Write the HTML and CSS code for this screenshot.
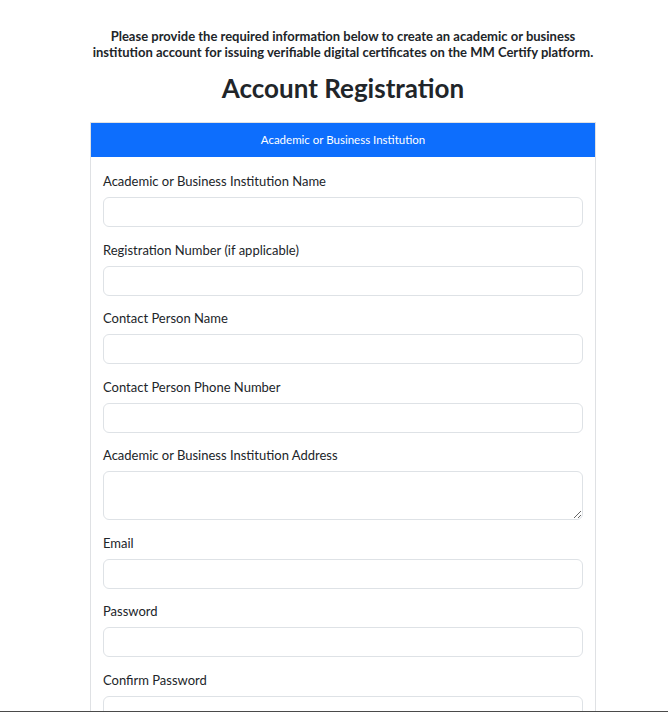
FILE: index.html
```html
<!DOCTYPE html>
<html lang="en">
<head>
<meta charset="utf-8">
<title>Account Registration</title>
<link rel="stylesheet" href="styles.css">
</head>
<body>
<main class="page">
  <p class="intro">Please provide the required information below to create an academic or business<br>institution account for issuing verifiable digital certificates on the MM Certify platform.</p>
  <h2 class="title">Account Registration</h2>
  <section class="card">
    <div class="card-header">Academic or Business Institution</div>
    <form class="card-body">
      <div class="field">
        <label class="label" for="name">Academic or Business Institution Name</label>
        <input class="control" id="name" type="text">
      </div>
      <div class="field">
        <label class="label" for="reg">Registration Number (if applicable)</label>
        <input class="control" id="reg" type="text">
      </div>
      <div class="field">
        <label class="label" for="contact">Contact Person Name</label>
        <input class="control" id="contact" type="text">
      </div>
      <div class="field">
        <label class="label" for="phone">Contact Person Phone Number</label>
        <input class="control" id="phone" type="text">
      </div>
      <div class="field">
        <label class="label" for="addr">Academic or Business Institution Address</label>
        <textarea class="control area" id="addr"></textarea>
      </div>
      <div class="field">
        <label class="label" for="email">Email</label>
        <input class="control" id="email" type="email">
      </div>
      <div class="field">
        <label class="label" for="pw">Password</label>
        <input class="control" id="pw" type="password">
      </div>
      <div class="field">
        <label class="label" for="pw2">Confirm Password</label>
        <input class="control" id="pw2" type="password">
      </div>
    </form>
  </section>
</main>
<div class="bottom-edge"></div>
</body>
</html>
```
FILE: styles.css
```css
* { box-sizing: border-box; }
html, body { margin: 0; padding: 0; background: #fff; }
body {
  font-family: Lato, "Noto Sans", sans-serif;
  color: #212529;
  overflow: hidden;
}
.page {
  width: 506px;
  margin-left: 90px;
  padding-top: 28px;
}
.intro {
  margin: 0 -60px;
  font-size: 13px;
  line-height: 16px;
  font-weight: 700;
  text-align: center;
  white-space: nowrap;
}
.title {
  margin: 11px 0 0;
  font-size: 26px;
  line-height: 34px;
  font-weight: 700;
  text-align: center;
}
.card {
  margin-top: 17px;
  border: 1px solid #dfe1e4;
  border-bottom: none;
  background: #fff;
}
.card-header {
  background: #0d6efd;
  color: #fff;
  text-align: center;
  font-size: 11.5px;
  line-height: 18px;
  padding: 8px 16px 8px;
}
.card-body {
  display: flex;
  flex-direction: column;
  padding: 14px 12px 0;
}
.field {
  display: flex;
  flex-direction: column;
  margin-bottom: 12.5px;
}
.label {
  font-size: 13px;
  line-height: 21px;
  margin-bottom: 5px;
}
.control {
  display: block;
  width: 100%;
  height: 30px;
  border: 1px solid #dee2e6;
  border-radius: 6px;
  background: #fff;
  font: inherit;
  font-size: 14px;
  padding: 4px 8px;
}
.area {
  height: 49px;
  resize: vertical;
}
.bottom-edge {
  position: fixed;
  left: 0;
  right: 0;
  bottom: 0;
  height: 1px;
  background: #4a4a4a;
}
```
